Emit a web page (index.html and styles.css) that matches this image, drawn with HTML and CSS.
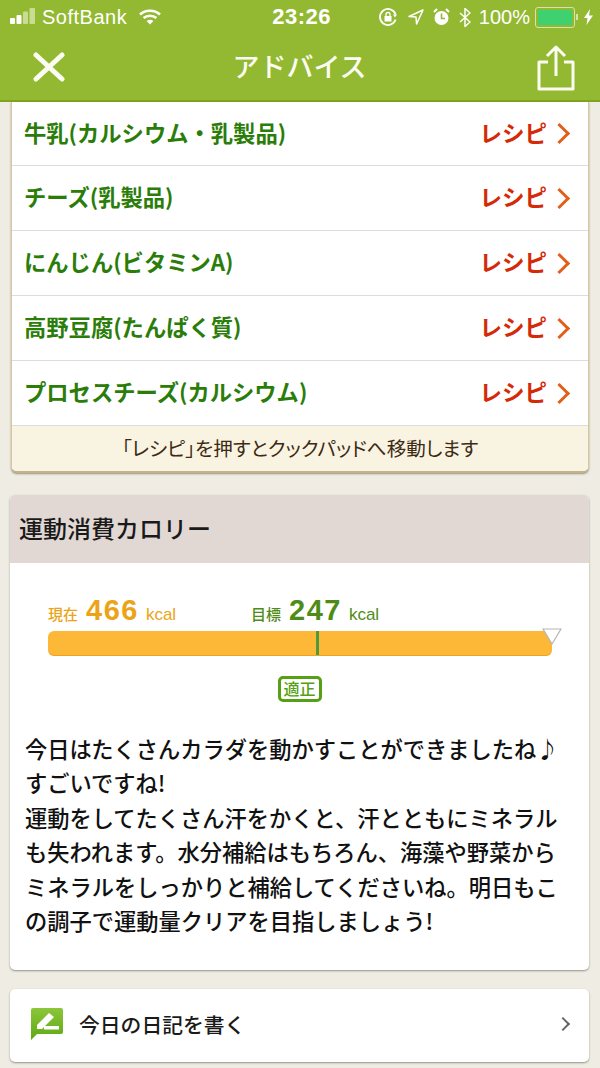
FILE: index.html
```html
<!DOCTYPE html>
<html lang="ja">
<head>
    <meta charset="UTF-8">
    <meta name="viewport" content="width=device-width, initial-scale=1.0">
    <title>アドバイス</title>
    <link rel="stylesheet" href="styles.css">
</head>
<body>
    <header class="top">
        <div class="status">
            <div class="status-left">
                <svg class="signal" width="26" height="18" viewBox="0 0 26 18">
                    <rect x="0" y="10" width="5" height="6" rx="1" fill="#fff"/>
                    <rect x="6.5" y="7" width="5" height="9" rx="1" fill="#fff"/>
                    <rect x="13" y="3.5" width="5" height="12.5" rx="1" fill="#c9dc93"/>
                    <rect x="19.5" y="0" width="5.5" height="16" rx="1" fill="#c9dc93"/>
                </svg>
                <span class="carrier">SoftBank</span>
                <svg class="wifi" width="22" height="16" viewBox="0 0 22 16" fill="none" stroke="#fff" stroke-width="2.6">
                    <path d="M1 5.5c5.6-5 14.4-5 20 0"/>
                    <path d="M4.6 9c3.6-3 9.2-3 12.8 0"/>
                    <path d="M11 15.5l-3.4-3.6c2-1.4 4.8-1.4 6.8 0z" fill="#fff" stroke="none"/>
                </svg>
            </div>
            <span class="clock">23:26</span>
            <div class="status-right">
                <svg width="20" height="20" viewBox="0 0 20 20" fill="none" stroke="#fff" stroke-width="1.8">
                    <path d="M17.6 12.5a8 8 0 1 1 0-5"/>
                    <path d="M15 7.5h4l-2 3z" fill="#fff" stroke="none"/>
                    <rect x="6.5" y="9" width="7" height="5.5" fill="#fff" stroke="none"/>
                    <path d="M8 9V7.5a2 2 0 0 1 4 0V9" stroke-width="1.3"/>
                </svg>
                <svg class="locate" width="16" height="16" viewBox="0 0 16 16" fill="none" stroke="#fff" stroke-width="1.5">
                    <path d="M15 1L1 7.5l7 .6.6 6.9z" stroke-linejoin="round"/>
                </svg>
                <svg class="alarm" width="17" height="18" viewBox="0 0 17 18">
                    <circle cx="8.5" cy="10" r="7" fill="#fff"/>
                    <path d="M1 4l3-3M16 4l-3-3" stroke="#fff" stroke-width="2"/>
                    <path d="M8.5 5.5V10.5H12" fill="none" stroke="#93b832" stroke-width="1.6"/>
                </svg>
                <svg class="blue" width="12" height="19" viewBox="0 0 12 19" fill="none" stroke="#fff" stroke-width="1.5">
                    <path d="M1 5l10 9-5 4.5V.5l5 4.5-10 9"/>
                </svg>
                <span class="percent">100%</span>
                <div class="battery"><div class="battery-fill"></div></div>
                <div class="battery-tip"></div>
                <svg class="bolt" width="9" height="16" viewBox="0 0 9 16">
                    <path d="M6 0L0 9h3.5L2.5 16 9 6.5H5z" fill="#fff"/>
                </svg>
            </div>
        </div>
        <nav class="nav">
            <svg class="close" width="32" height="30" viewBox="0 0 32 30" fill="none" stroke="#fbfdf2" stroke-width="5" stroke-linecap="round">
                <path d="M3 3l26 24M29 3L3 27"/>
            </svg>
            <h1 class="nav-title">アドバイス</h1>
            <svg class="share" width="38" height="46" viewBox="0 0 38 46" fill="none" stroke="#fbfdf2" stroke-width="3" stroke-linejoin="round">
                <path d="M11 17H2v27h34V17h-9"/>
                <path d="M19 31V2M10 11l9-9 9 9"/>
            </svg>
        </nav>
    </header>

    <main class="content">
        <section class="card recipes">
            <a class="recipe-row"><span class="food">牛乳(カルシウム・乳製品)</span><span class="recipe-link">レシピ</span><i class="arrow"></i></a>
            <a class="recipe-row"><span class="food">チーズ(乳製品)</span><span class="recipe-link">レシピ</span><i class="arrow"></i></a>
            <a class="recipe-row"><span class="food">にんじん(ビタミンA)</span><span class="recipe-link">レシピ</span><i class="arrow"></i></a>
            <a class="recipe-row"><span class="food">高野豆腐(たんぱく質)</span><span class="recipe-link">レシピ</span><i class="arrow"></i></a>
            <a class="recipe-row"><span class="food">プロセスチーズ(カルシウム)</span><span class="recipe-link">レシピ</span><i class="arrow"></i></a>
            <p class="recipes-note">「レシピ」を押すとクックパッドへ移動します</p>
        </section>

        <section class="card exercise">
            <h2 class="card-title">運動消費カロリー</h2>
            <div class="exercise-body">
                <div class="gauge-labels">
                    <div class="gauge-label now">現在<b>466</b><small>kcal</small></div>
                    <div class="gauge-label goal">目標<b>247</b><small>kcal</small></div>
                </div>
                <div class="gauge">
                    <div class="gauge-mark" style="left: 53.2%"></div>
                    <svg class="gauge-now" width="20" height="17" viewBox="0 0 20 17">
                        <path d="M1 1h18l-9 15z" fill="#fff" stroke="#b5b5b0" stroke-width="1.2"/>
                    </svg>
                </div>
                <div class="badge-wrap"><span class="badge">適正</span></div>
                <p class="advice">今日はたくさんカラダを動かすことができましたね♪<br>すごいですね!<br>運動をしてたくさん汗をかくと、汗とともにミネラルも失われます。水分補給はもちろん、海藻や野菜からミネラルをしっかりと補給してくださいね。明日もこの調子で運動量クリアを目指しましょう!</p>
            </div>
        </section>

        <a class="card diary">
            <svg class="diary-icon" width="32" height="32" viewBox="0 0 32 32">
                <defs>
                    <linearGradient id="diaryGreen" x1="0" y1="0" x2="0" y2="1">
                        <stop offset="0" stop-color="#8cc63a"/>
                        <stop offset="1" stop-color="#5ea814"/>
                    </linearGradient>
                </defs>
                <path d="M2 0h28a2 2 0 0 1 2 2v22a2 2 0 0 1-2 2H6l-6 6V2a2 2 0 0 1 2-2z" fill="url(#diaryGreen)"/>
                <path d="M6 17L18 5l5 4-12 12H6z" fill="#fff"/>
                <rect x="13" y="18" width="15" height="3.5" fill="#fff"/>
            </svg>
            <span class="diary-text">今日の日記を書く</span>
            <i class="diary-arrow"></i>
        </a>
    </main>
</body>
</html>
```

FILE: styles.css
```css
body {
    margin: 0;
    height: 1068px;
    overflow: hidden;
    background-color: #efece4;
    font-family: "Noto Sans CJK JP", "Noto Sans", sans-serif;
    color: #1a1a1a;
}

/* top bar */
.top {
    height: 100px;
    background-color: #93b832;
    border-bottom: 2px solid #7fa31f;
    color: #fff;
}

.status {
    height: 34px;
    display: flex;
    align-items: center;
    font-family: "Liberation Sans", sans-serif;
    font-size: 20px;
}

.status-left {
    display: flex;
    align-items: center;
    padding-left: 10px;
}

.carrier {
    margin-left: 6px;
    letter-spacing: 0.5px;
}

.wifi {
    margin-left: 12px;
}

.clock {
    margin-left: 111px;
    font-size: 22px;
    font-weight: bold;
    letter-spacing: 0.5px;
}

.status-right {
    display: flex;
    align-items: center;
    margin-left: auto;
    padding-right: 7px;
}

.locate {
    margin-left: 10px;
}

.alarm {
    margin-left: 9px;
}

.blue {
    margin-left: 9px;
}

.percent {
    margin-left: 8px;
}

.battery {
    width: 34px;
    height: 15px;
    margin-left: 5px;
    padding: 2px;
    border: 1px solid #d5e4a8;
    border-radius: 3px;
}

.battery-fill {
    height: 100%;
    background-color: #3fd06f;
    border-radius: 1px;
}

.battery-tip {
    width: 2px;
    height: 6px;
    margin-left: 1px;
    background-color: #d5e4a8;
}

.bolt {
    margin-left: 6px;
}

.nav {
    height: 66px;
    display: flex;
    align-items: center;
    justify-content: space-between;
    padding: 0 25px 0 33px;
}

.nav-title {
    margin: 0 3px 4px 0;
    font-size: 27px;
    font-weight: 500;
    color: #fbfdf2;
}

.share {
    margin-top: 2px;
}

/* cards */
.content {
    display: flex;
    flex-direction: column;
    padding: 0 11px;
}

.card {
    background-color: white;
    border-radius: 5px;
    box-shadow: 0 1px 2px rgba(90, 85, 70, 0.6);
}

.recipes {
    border-radius: 0 0 6px 6px;
    border: 1px solid #d6c898;
    border-top: none;
    border-bottom: 2px solid #c4b482;
}

.recipe-row {
    height: 64px;
    display: flex;
    align-items: center;
    padding: 0 14px 0 12px;
    border-bottom: 1px solid #ddd;
}

.recipe-row:first-child {
    height: 63px;
}

.food {
    flex: 1;
    margin-bottom: 4px;
    font-size: 22.3px;
    font-weight: 700;
    color: #2b7d0a;
}

.recipe-link {
    margin-bottom: 4px;
    font-size: 22.5px;
    font-weight: 700;
    color: #d42a08;
}

.arrow {
    width: 12px;
    height: 12px;
    margin: 0 7px 0 5px;
    border-top: 3px solid #e0601a;
    border-right: 3px solid #e0601a;
    transform: rotate(45deg);
}

.recipes-note {
    height: 45px;
    margin: 0;
    line-height: 44px;
    text-align: center;
    font-size: 19.6px;
    background-color: #f9f4e2;
    color: #3d2a14;
    border-radius: 0 0 5px 5px;
    font-feature-settings: "palt";
}

.exercise {
    margin-top: 22px;
    margin-left: -1px;
}

.card-title {
    height: 68px;
    margin: 0;
    padding-left: 9px;
    line-height: 66px;
    font-size: 24px;
    font-weight: 500;
    background-color: #e2d8d3;
    border-radius: 5px 5px 0 0;
}

.exercise-body {
    height: 407px;
    padding-top: 30px;
    box-sizing: border-box;
}

.gauge-labels {
    display: flex;
    height: 38px;
    padding-left: 38px;
}

.gauge-label {
    font-size: 15px;
    line-height: 34px;
    font-weight: 500;
}

.gauge-label b {
    margin-left: 8px;
    font-family: "Liberation Sans", sans-serif;
    font-size: 29px;
    font-weight: bold;
    letter-spacing: 1.5px;
}

.gauge-label small {
    margin-left: 7px;
    font-family: "Liberation Sans", sans-serif;
    font-size: 17px;
}

.now {
    width: 203px;
    color: #eba417;
}

.goal {
    color: #4f8c17;
}

.gauge {
    position: relative;
    height: 25px;
    margin: 0 37px 0 38px;
    background-color: #fdb838;
    border-bottom: 1px solid #eda51e;
    box-sizing: border-box;
    border-radius: 6px;
}

.gauge-mark {
    position: absolute;
    top: 0;
    bottom: 0;
    width: 3px;
    background-color: #4f9a3c;
}

.gauge-now {
    position: absolute;
    top: -3px;
    right: -10px;
}

.badge-wrap {
    display: flex;
    justify-content: center;
    margin: 20px 0 0;
}

.badge {
    width: 44px;
    height: 26px;
    box-sizing: border-box;
    border: 3px solid #55a014;
    border-radius: 5px;
    line-height: 19px;
    text-align: center;
    font-size: 16px;
    font-weight: 500;
    color: #55a014;
}

.advice {
    margin: 29px 0 0;
    padding: 0 25px 0 15px;
    font-size: 22.25px;
    line-height: 34.4px;
    font-weight: 500;
    color: #111;
}

.diary {
    height: 73px;
    margin-top: 19px;
    margin-left: -1px;
    display: flex;
    align-items: center;
    padding-left: 21px;
}

.diary-icon {
    flex: none;
    margin-bottom: 4px;
}

.diary-text {
    flex: 1;
    margin: 0 0 4px 16px;
    font-size: 20.8px;
    font-weight: 500;
}

.diary-arrow {
    width: 8px;
    height: 8px;
    margin: 0 21px 3px 0;
    border-top: 2px solid #666;
    border-right: 2px solid #666;
    transform: rotate(45deg);
}
```
